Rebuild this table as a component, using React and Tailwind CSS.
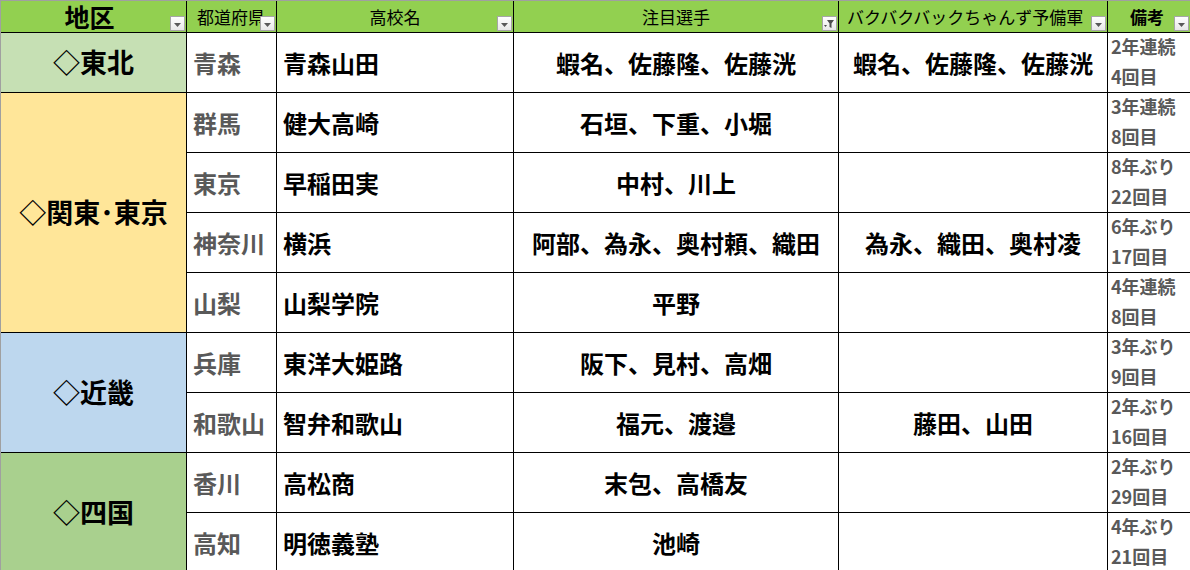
import React from 'react';

const FONT = { fontFamily: '"Noto Sans CJK JP", "Noto Sans", sans-serif' };

const REGIONS = [
  {
    name: '◇東北',
    bg: 'bg-[#c6e0b4]',
    rows: [
      ['青森', '青森山田', '蝦名、佐藤隆、佐藤洸', '蝦名、佐藤隆、佐藤洸', '2年連続', '4回目'],
    ],
  },
  {
    name: '◇関東･東京',
    bg: 'bg-[#ffe699]',
    rows: [
      ['群馬', '健大高崎', '石垣、下重、小堀', '', '3年連続', '8回目'],
      ['東京', '早稲田実', '中村、川上', '', '8年ぶり', '22回目'],
      ['神奈川', '横浜', '阿部、為永、奥村頼、織田', '為永、織田、奥村凌', '6年ぶり', '17回目'],
      ['山梨', '山梨学院', '平野', '', '4年連続', '8回目'],
    ],
  },
  {
    name: '◇近畿',
    bg: 'bg-[#bdd7ee]',
    rows: [
      ['兵庫', '東洋大姫路', '阪下、見村、高畑', '', '3年ぶり', '9回目'],
      ['和歌山', '智弁和歌山', '福元、渡邉', '藤田、山田', '2年ぶり', '16回目'],
    ],
  },
  {
    name: '◇四国',
    bg: 'bg-[#a9d08e]',
    rows: [
      ['香川', '高松商', '末包、高橋友', '', '2年ぶり', '29回目'],
      ['高知', '明徳義塾', '池崎', '', '4年ぶり', '21回目'],
    ],
  },
];

function FilterButton({ filtered }) {
  return (
    <div className="absolute right-px bottom-px w-[15px] h-[15px] border border-[#a6a6a6] bg-gradient-to-b from-white to-[#e8e8e8] flex items-center justify-center">
      {filtered ? (
        <svg width="11" height="11" viewBox="0 0 11 11">
          <path d="M3 2h7L7.5 5.5V10L5.5 9V5.5z" fill="#4d4d4d" />
          <path d="M0 7h3L1.5 9z" fill="#4d4d4d" />
        </svg>
      ) : (
        <svg width="7" height="4" viewBox="0 0 7 4" className="mt-[2px]">
          <path d="M0 0h7L3.5 4z" fill="#595959" />
        </svg>
      )}
    </div>
  );
}

function HeaderCell({ children, className = '', filtered }) {
  return (
    <div className={`relative bg-[#92d050] flex items-center overflow-hidden whitespace-nowrap text-black leading-none ${className}`}>
      {children}
      <FilterButton filtered={filtered} />
    </div>
  );
}

export default function App() {
  let rowIdx = 2;
  const cells = [];

  REGIONS.forEach(region => {
    const start = rowIdx;
    cells.push(
      <div
        key={region.name}
        className={`${region.bg} flex items-center justify-center text-[27px] font-bold text-black`}
        style={{ gridColumn: 1, gridRow: `${start} / span ${region.rows.length}` }}
      >
        {region.name}
      </div>
    );
    region.rows.forEach(r => {
      const [pref, school, players, reserve, note1, note2] = r;
      const gr = rowIdx;
      cells.push(
        <div key={`p${gr}`} className="bg-white flex items-center pl-[6px] text-[24px] font-bold text-[#595959] whitespace-nowrap overflow-hidden" style={{ gridColumn: 2, gridRow: gr }}>{pref}</div>,
        <div key={`s${gr}`} className="bg-white flex items-center pl-[6px] text-[24px] font-bold text-black whitespace-nowrap overflow-hidden" style={{ gridColumn: 3, gridRow: gr }}>{school}</div>,
        <div key={`n${gr}`} className="bg-white flex items-center justify-center text-[24px] font-bold text-black whitespace-nowrap overflow-hidden" style={{ gridColumn: 4, gridRow: gr }}>{players}</div>,
        <div key={`r${gr}`} className="bg-white flex items-center justify-center text-[24px] font-bold text-black whitespace-nowrap overflow-hidden" style={{ gridColumn: 5, gridRow: gr }}>{reserve}</div>,
        <div key={`b${gr}`} className="bg-white flex flex-col justify-center pl-[3px] pb-[3px] text-[18px] leading-[30px] font-bold text-[#595959] whitespace-nowrap overflow-hidden" style={{ gridColumn: 6, gridRow: gr }}>
          <span>{note1}</span>
          <span>{note2}</span>
        </div>
      );
      rowIdx += 1;
    });
  });

  return (
    <div className="w-[1190px] h-[570px] overflow-hidden bg-white" style={FONT}>
      <div className="border-t border-l border-[#a0a0a0] bg-black grid gap-px grid-cols-[185px_89px_236px_324px_268px_1fr] grid-rows-[31px_repeat(9,59px)]">
        <HeaderCell className="justify-center pr-[8px] text-[25px] font-bold">地区</HeaderCell>
        <HeaderCell className="pl-[10px] text-[17px]">都道府県</HeaderCell>
        <HeaderCell className="justify-center text-[17px]">高校名</HeaderCell>
        <HeaderCell className="justify-center text-[17px]" filtered>注目選手</HeaderCell>
        <HeaderCell className="pl-[8px] text-[17px]">バクバクバックちゃんず予備軍</HeaderCell>
        <HeaderCell className="pl-[22px] text-[17px] font-bold">備考</HeaderCell>
        {cells}
      </div>
    </div>
  );
}
